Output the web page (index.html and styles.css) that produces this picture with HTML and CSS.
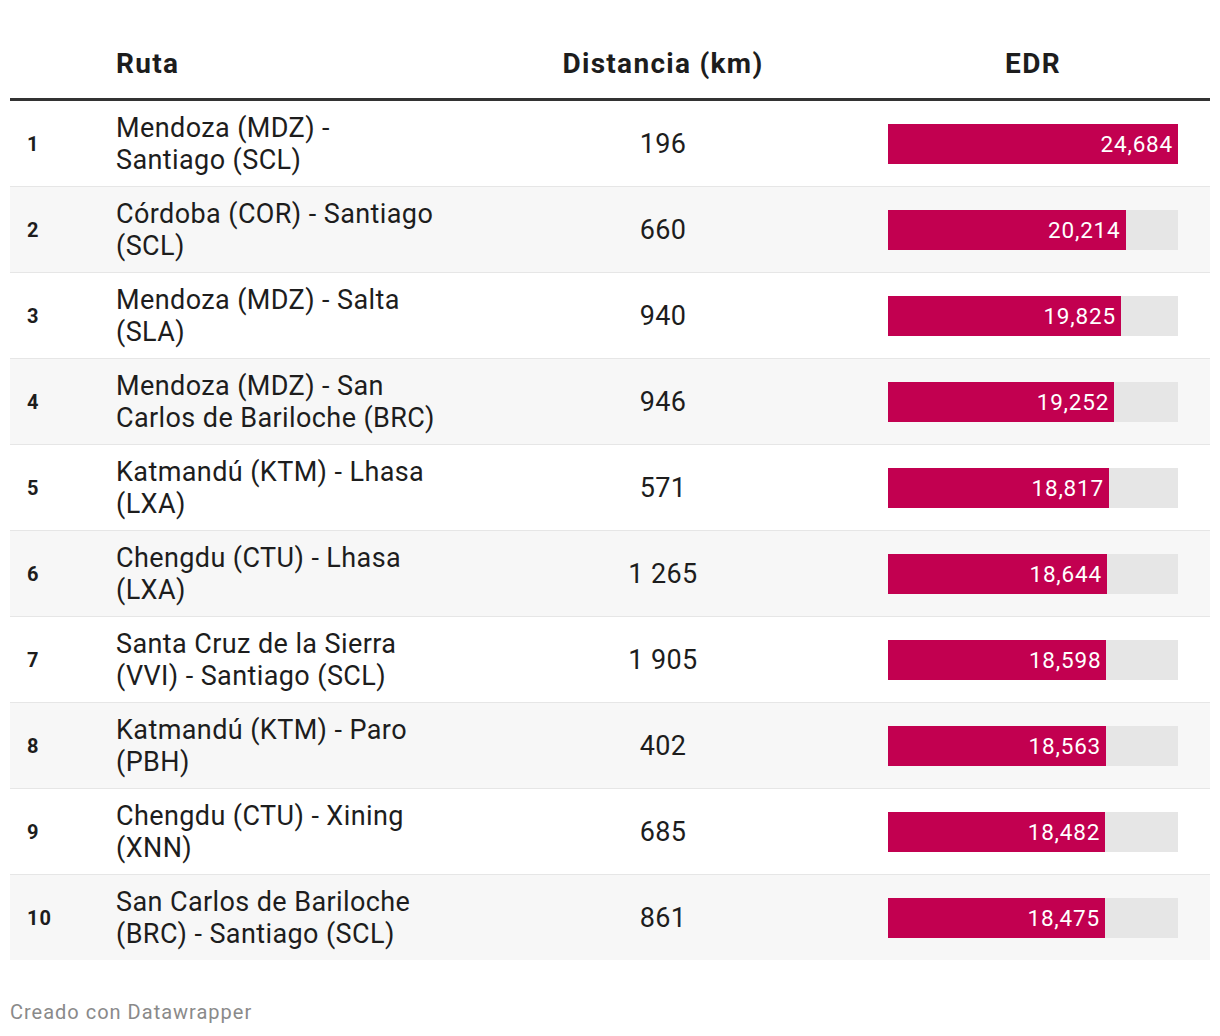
FILE: index.html
```html
<!DOCTYPE html>
<html lang="es">
<head>
<meta charset="utf-8">
<link rel="stylesheet" href="styles.css">
</head>
<body>
<div class="table">
  <div class="row head">
    <div class="cell rank"></div>
    <div class="cell route">Ruta</div>
    <div class="cell dist">Distancia (km)</div>
    <div class="cell edr"><span class="edr-title">EDR</span></div>
  </div>
  <div class="row">
    <div class="cell rank">1</div>
    <div class="cell route">Mendoza (MDZ) -<br>Santiago (SCL)</div>
    <div class="cell dist">196</div>
    <div class="cell edr"><div class="track"><div class="bar" style="width:100%"><span>24,684</span></div></div></div>
  </div>
  <div class="row alt">
    <div class="cell rank">2</div>
    <div class="cell route">Córdoba (COR) - Santiago<br>(SCL)</div>
    <div class="cell dist">660</div>
    <div class="cell edr"><div class="track"><div class="bar" style="width:81.9%"><span>20,214</span></div></div></div>
  </div>
  <div class="row">
    <div class="cell rank">3</div>
    <div class="cell route">Mendoza (MDZ) - Salta<br>(SLA)</div>
    <div class="cell dist">940</div>
    <div class="cell edr"><div class="track"><div class="bar" style="width:80.3%"><span>19,825</span></div></div></div>
  </div>
  <div class="row alt">
    <div class="cell rank">4</div>
    <div class="cell route">Mendoza (MDZ) - San<br>Carlos de Bariloche (BRC)</div>
    <div class="cell dist">946</div>
    <div class="cell edr"><div class="track"><div class="bar" style="width:78.0%"><span>19,252</span></div></div></div>
  </div>
  <div class="row">
    <div class="cell rank">5</div>
    <div class="cell route">Katmandú (KTM) - Lhasa<br>(LXA)</div>
    <div class="cell dist">571</div>
    <div class="cell edr"><div class="track"><div class="bar" style="width:76.2%"><span>18,817</span></div></div></div>
  </div>
  <div class="row alt">
    <div class="cell rank">6</div>
    <div class="cell route">Chengdu (CTU) - Lhasa<br>(LXA)</div>
    <div class="cell dist">1 265</div>
    <div class="cell edr"><div class="track"><div class="bar" style="width:75.5%"><span>18,644</span></div></div></div>
  </div>
  <div class="row">
    <div class="cell rank">7</div>
    <div class="cell route">Santa Cruz de la Sierra<br>(VVI) - Santiago (SCL)</div>
    <div class="cell dist">1 905</div>
    <div class="cell edr"><div class="track"><div class="bar" style="width:75.3%"><span>18,598</span></div></div></div>
  </div>
  <div class="row alt">
    <div class="cell rank">8</div>
    <div class="cell route">Katmandú (KTM) - Paro<br>(PBH)</div>
    <div class="cell dist">402</div>
    <div class="cell edr"><div class="track"><div class="bar" style="width:75.2%"><span>18,563</span></div></div></div>
  </div>
  <div class="row">
    <div class="cell rank">9</div>
    <div class="cell route">Chengdu (CTU) - Xining<br>(XNN)</div>
    <div class="cell dist">685</div>
    <div class="cell edr"><div class="track"><div class="bar" style="width:74.9%"><span>18,482</span></div></div></div>
  </div>
  <div class="row alt last">
    <div class="cell rank">10</div>
    <div class="cell route">San Carlos de Bariloche<br>(BRC) - Santiago (SCL)</div>
    <div class="cell dist">861</div>
    <div class="cell edr"><div class="track"><div class="bar" style="width:74.8%"><span>18,475</span></div></div></div>
  </div>
</div>
<div class="footer">Creado con Datawrapper</div>
</body>
</html>
```

FILE: styles.css
```css
html, body {
  margin: 0;
  padding: 0;
  background: #ffffff;
}
body {
  padding: 0 10px;
  font-family: Roboto, "Liberation Sans", sans-serif;
  color: #1d1d1d;
  letter-spacing: 1px;
}
.table {
  display: flex;
  flex-direction: column;
}
.row {
  display: grid;
  grid-template-columns: 96px 364px 386px 354px;
  height: 85px;
  border-bottom: 1px solid #e6e6e6;
  align-items: center;
}
.row.alt {
  background: #f7f7f7;
}
.row.last {
  border-bottom: none;
}
.row.head {
  height: 98px;
  border-bottom: 3px solid #333333;
  align-items: end;
  font-weight: 700;
  font-size: 28px;
  line-height: 34px;
  letter-spacing: 1.3px;
}
.head .cell {
  padding-bottom: 17px;
}
.cell.rank {
  padding-left: 17px;
  font-weight: 700;
  font-size: 20px;
}
.cell.route {
  padding-left: 10px;
  font-size: 27px;
  line-height: 32px;
  letter-spacing: 0.4px;
}
.head .cell.route {
  font-size: 28px;
  line-height: 34px;
  letter-spacing: 1.3px;
}
.cell.dist {
  text-align: center;
  font-size: 27px;
  letter-spacing: 0.4px;
}
.head .cell.dist {
  font-size: 28px;
  letter-spacing: 1.3px;
}
.cell.edr {
  padding-left: 32px;
}
.edr-title {
  display: block;
  width: 290px;
  text-align: center;
}
.track {
  width: 290px;
  height: 40px;
  background: #e6e6e6;
  display: flex;
}
.bar {
  height: 40px;
  background: #c20050;
  color: #ffffff;
  display: flex;
  align-items: center;
  justify-content: flex-end;
  font-size: 22.5px;
  letter-spacing: 0.8px;
}
.bar span {
  padding-right: 5px;
}
.footer {
  margin-top: 40px;
  font-size: 20px;
  color: #8a8a8a;
}
```
